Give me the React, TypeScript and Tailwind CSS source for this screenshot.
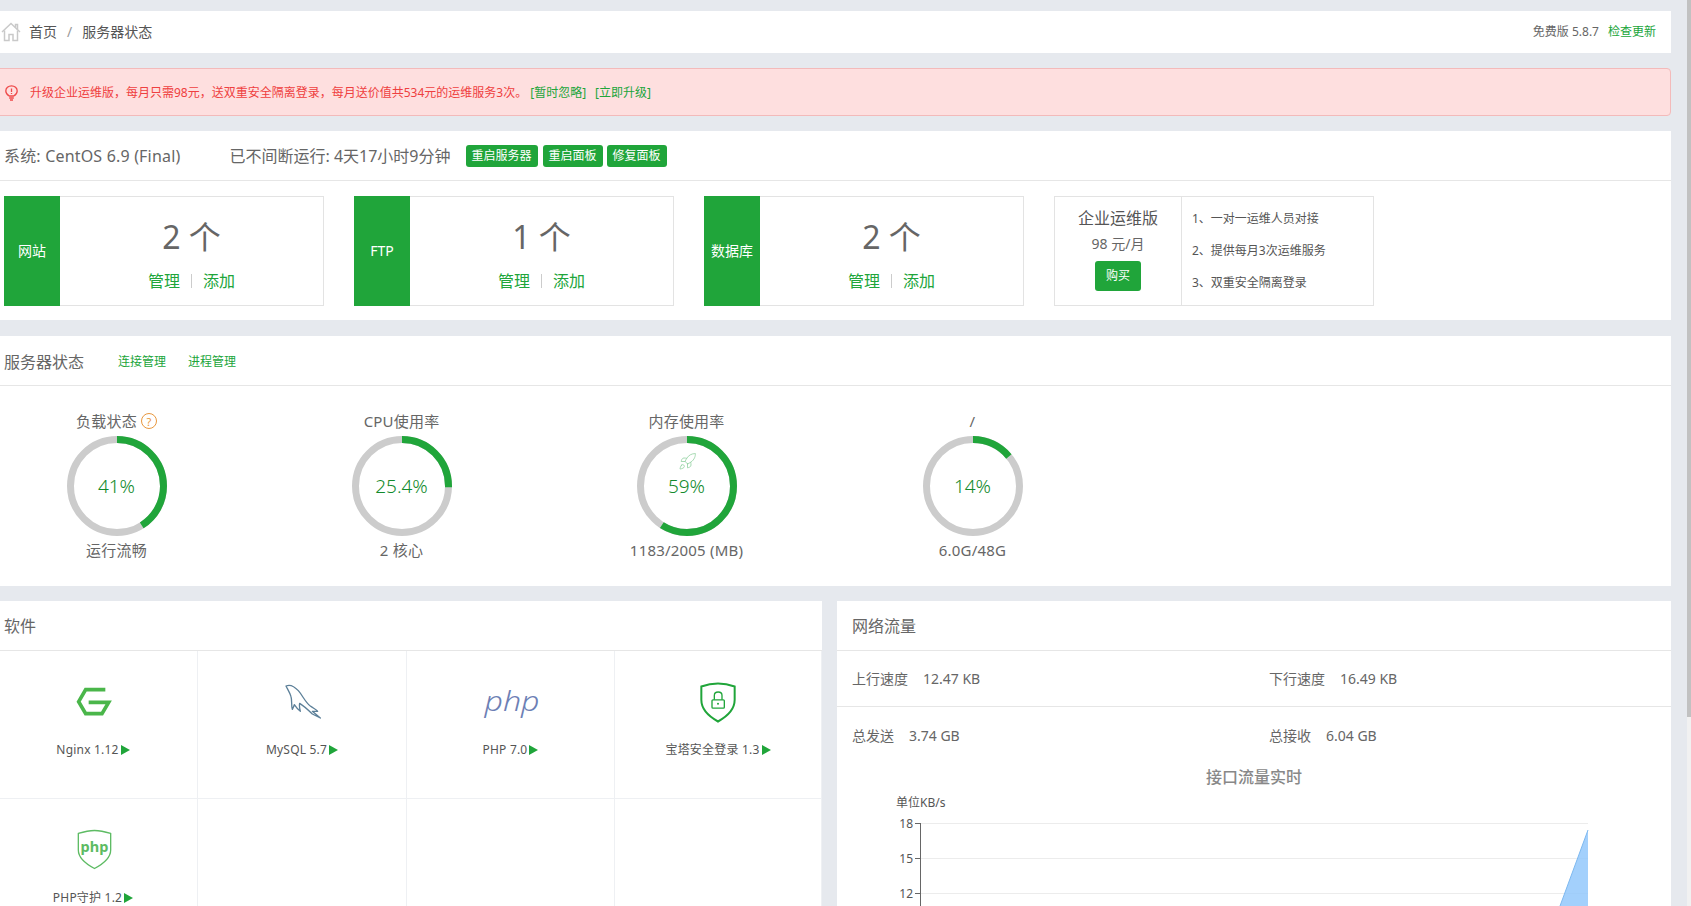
import { Rocket } from 'lucide-react'

const GREEN = '#20a53a'

function HomeIcon() {
  return (
    <svg width="20" height="20" viewBox="0 0 20 20" fill="none" stroke="#c9c9c9" strokeWidth="1.5">
      <path d="M1 10 L10 1.5 L19 10" />
      <path d="M14.5 5.5 V2.5 H16.5 V7.5" />
      <path d="M3.5 8.5 V18.5 H8 V12.5 H12 V18.5 H16.5 V8.5" />
    </svg>
  )
}

function BulbIcon() {
  return (
    <svg width="13" height="16" viewBox="0 0 13 16" fill="none" stroke="#ef4a4a" strokeWidth="1.3">
      <path d="M4.2 11 C2 9.6 0.8 7.9 0.8 5.9 C0.8 3 3.3 0.8 6.5 0.8 C9.7 0.8 12.2 3 12.2 5.9 C12.2 7.9 11 9.6 8.8 11 Z" />
      <path d="M4.2 13 H8.8 M5 15 H8" />
      <path d="M6.5 3.4 V7 M6.5 8 V9" />
    </svg>
  )
}

function Stat({ label, count }: { label: string; count: number }) {
  return (
    <div className="flex h-[110px] w-[320px] border border-[#e3e3e3]">
      <div className="-my-px -ml-px flex w-[56px] items-center justify-center bg-[#20a53a] pb-[2px] text-[14px] text-white">{label}</div>
      <div className="flex flex-1 flex-col items-center">
        <div className="mt-[18px] flex h-[44px] items-center text-[32px] text-[#666]">{count} 个</div>
        <div className="mt-[10px] flex h-[24px] items-center text-[16px] text-[#20a53a]">
          管理
          <span className="mx-[11px] h-[14px] w-px bg-[#ccc]" />
          添加
        </div>
      </div>
    </div>
  )
}

function Gauge({ title, value, text, bottom, hint, rocket, last }: { title: string; value: number; text: string; bottom: string; hint?: boolean; rocket?: boolean; last?: boolean }) {
  const r = 46.5
  const c = 2 * Math.PI * r
  return (
    <div className={last ? 'ml-[1px] flex w-[285px] flex-col items-center' : 'flex w-[285px] flex-col items-center'}>
      <div className="flex h-[20px] items-center text-[15px] tracking-[0.2px] text-[#666]">
        {title}
        {hint && (
          <span className="ml-[4px] flex size-[16px] items-center justify-center rounded-full border border-[#e8973e] text-[11px] leading-none text-[#e8973e]">?</span>
        )}
      </div>
      <div className="relative mt-[5px] size-[100px]">
        <svg width="100" height="100" viewBox="0 0 100 100" className="block -rotate-90">
          <circle cx="50" cy="50" r={r} fill="none" stroke="#cccccc" strokeWidth="7" />
          <circle cx="50" cy="50" r={r} fill="none" stroke={GREEN} strokeWidth="7" strokeDasharray={`${(c * value) / 100} ${c}`} />
        </svg>
        {rocket && <Rocket className="absolute top-[16px] left-[41px] text-[#8fd09e]" size={19} strokeWidth={1} />}
        <div className="absolute inset-0 flex items-center justify-center text-[19px] font-light text-[#128a2c]">{text}</div>
      </div>
      <div className="mt-[4px] flex h-[20px] items-center text-[15px] tracking-[0.2px] text-[#666]">{bottom}</div>
    </div>
  )
}

function NginxLogo() {
  return (
    <svg width="36" height="30" viewBox="80 80 108 90" fill="none" stroke="#4ab64a" strokeWidth="11" className="-mt-[2px]">
      <path d="M168 88 H109 L88 124 L109 160 H158 L178 126 H118" />
    </svg>
  )
}

function MysqlLogo() {
  return (
    <svg width="36" height="35" viewBox="70 40 108 105" fill="none" stroke="#5d8099" strokeWidth="4" strokeLinejoin="round" className="-mt-[4px]">
      <path d="M73 46 C84 41 98 47 110 60 C124 76 130 94 146 106 C156 113 164 117 168 122 L152 122 L176 142 L152 130 C142 120 130 108 114 98 C112 106 114 114 116 122 C108 116 102 108 98 102 C96 108 94 112 92 116 C88 104 92 92 88 78 C85 66 78 56 73 46 Z" />
    </svg>
  )
}

function PhpLogo() {
  return <span className="-mt-[6px] scale-x-[1.15] text-[28px] leading-none font-light text-[#6d7fb5] italic">php</span>
}

function LockShield() {
  return (
    <svg width="36" height="41" viewBox="60 32 108 122" fill="none" stroke={GREEN} className="-mt-[2px] -ml-[3px]">
      <path d="M114 36 C96 36 78 40 64 45 V85 C64 115 92 138 114 150 C136 138 164 115 164 85 V45 C150 40 132 36 114 36 Z" strokeWidth="6" />
      <rect x="96" y="85" width="37" height="25" rx="3" strokeWidth="4" />
      <path d="M103 85 V72 C103 58 126 58 126 72 V85" strokeWidth="4" />
      <circle cx="114" cy="97" r="3" fill={GREEN} stroke="none" />
    </svg>
  )
}

function PhpShield() {
  return (
    <svg width="35" height="41" viewBox="50 37 106 123" fill="none" className="-mt-[4px]">
      <path d="M103 41 C86 41 70 45 54 50 V100 C54 125 84 146 103 156 C122 146 152 125 152 100 V50 C136 45 120 41 103 41 Z" stroke="#5dbb63" strokeWidth="4" />
      <text x="103" y="105" textAnchor="middle" fontSize="44" fontWeight="700" fill="#5dbb63">php</text>
    </svg>
  )
}

function Soft({ name, children }: { name: string; children: React.ReactNode }) {
  return (
    <div className="flex h-[148px] flex-col items-center border-r border-b border-[#eef0f3]">
      <div className="mt-[22px] ml-[2px] flex h-[60px] items-center justify-center">{children}</div>
      <div className="mt-[7px] flex h-[20px] items-center text-[12px] tracking-[0.2px] text-[#555]">
        {name}
        <span className="ml-[2px] h-0 w-0 border-y-[5px] border-l-[9px] border-y-transparent border-l-[#20a53a]" />
      </div>
    </div>
  )
}

function NetRow({ cells }: { cells: [string, string][] }) {
  return (
    <div className="grid h-[56px] grid-cols-2 border-b border-[#e6e6e6] text-[14px] text-[#666] last:border-b-0">
      {cells.map(([k, v]) => (
        <div key={k} className="flex items-center gap-[15px] pl-[15px]">
          <span>{k}</span>
          <span>{v}</span>
        </div>
      ))}
    </div>
  )
}

function Chart() {
  return (
    <svg width="834" height="116" viewBox="0 0 834 116" className="block">
      <text x="59" y="17" fontSize="12" fill="#555">单位KB/s</text>
      {[33, 68, 103].map((y) => (
        <g key={y}>
          <line x1="84" y1={y + 0.5} x2="751" y2={y + 0.5} stroke="#ececec" />
          <line x1="78" y1={y + 0.5} x2="84" y2={y + 0.5} stroke="#666" />
        </g>
      ))}
      <line x1="83.5" y1="33" x2="83.5" y2="116" stroke="#666" />
      <text x="76" y="38" textAnchor="end" fontSize="12" fill="#555">18</text>
      <text x="76" y="73" textAnchor="end" fontSize="12" fill="#555">15</text>
      <text x="76" y="108" textAnchor="end" fontSize="12" fill="#555">12</text>
      <polygon points="751,40 751,116 723,116" fill="#8fc6fb" fillOpacity="0.82" />
      <line x1="723" y1="116" x2="751" y2="40" stroke="#7db8ef" />
    </svg>
  )
}

export default function App() {
  return (
    <div className="flex h-[906px] w-[1691px] overflow-hidden bg-[#e6e9ee] font-['Noto_Sans','Noto_Sans_CJK_SC',sans-serif] text-[#555]">
      <main className="-ml-[11px] flex w-[1698px] shrink-0 flex-col pt-[11px] pr-[16px]">
        <div className="flex h-[42px] shrink-0 items-center justify-between bg-white pr-[15px] pl-[12px]">
          <div className="flex items-center text-[14px]">
            <HomeIcon />
            <span className="-mt-[2px] ml-[8px]">首页</span>
            <span className="-mt-[2px] mx-[10px] text-[#999]">/</span>
            <span className="-mt-[2px]">服务器状态</span>
          </div>
          <div className="flex items-center text-[12px] text-[#666]">
            <span>免费版 5.8.7</span>
            <span className="ml-[9px] text-[#20a53a]">检查更新</span>
          </div>
        </div>

        <div className="mt-[15px] flex h-[48px] shrink-0 items-center rounded-[4px] border border-[#f3baba] bg-[#fedfdf] pt-[2px] pl-[15px] text-[12px] text-[#ef4040]">
          <BulbIcon />
          <span className="ml-[12px]">升级企业运维版，每月只需98元，送双重安全隔离登录，每月送价值共534元的运维服务3次。</span>
          <span className="ml-[3px] text-[#20a53a]">[暂时忽略]</span>
          <span className="ml-[9px] text-[#20a53a]">[立即升级]</span>
        </div>

        <section className="mt-[15px] shrink-0 bg-white">
          <div className="flex h-[50px] items-center border-b border-[#e6e6e6] pl-[15px] text-[16px] text-[#666]">
            <span className="tracking-[0.18px]">系统: CentOS 6.9 (Final)</span>
            <span className="ml-[49px]">已不间断运行: 4天17小时9分钟</span>
            <div className="ml-[15px] flex text-[12px] text-white">
              <span className="flex h-[22px] items-center rounded-[3px] bg-[#20a53a] px-[6px] pt-[1px]">重启服务器</span>
              <span className="ml-[5px] flex h-[22px] items-center rounded-[3px] bg-[#20a53a] px-[6px] pt-[1px]">重启面板</span>
              <span className="ml-[4px] flex h-[22px] items-center rounded-[3px] bg-[#20a53a] px-[6px] pt-[1px]">修复面板</span>
            </div>
          </div>
          <div className="flex gap-[30px] pt-[15px] pb-[14px] pl-[15px]">
            <Stat label="网站" count={2} />
            <Stat label="FTP" count={1} />
            <Stat label="数据库" count={2} />
            <div className="flex h-[110px] w-[320px] border border-[#e3e3e3]">
              <div className="flex w-[127px] flex-col items-center border-r border-[#e3e3e3]">
                <div className="mt-[10px] flex h-[22px] items-center text-[16px] text-[#555]">企业运维版</div>
                <div className="mt-[3px] flex h-[22px] items-center text-[14px] text-[#666]">98 元/月</div>
                <div className="mt-[7px] flex h-[30px] w-[46px] items-center justify-center rounded-[3px] bg-[#20a53a] text-[12px] text-white">购买</div>
              </div>
              <div className="flex flex-1 flex-col gap-[12px] pt-[12px] pl-[10px] text-[12px] text-[#555]">
                <div className="flex h-[20px] items-center">1、一对一运维人员对接</div>
                <div className="flex h-[20px] items-center">2、提供每月3次运维服务</div>
                <div className="flex h-[20px] items-center">3、双重安全隔离登录</div>
              </div>
            </div>
          </div>
        </section>

        <section className="mt-[16px] shrink-0 bg-white">
          <div className="flex h-[50px] items-center border-b border-[#e6e6e6] pt-[2px] pl-[15px]">
            <span className="text-[16px] text-[#666]">服务器状态</span>
            <span className="ml-[34px] text-[12px] text-[#20a53a]">连接管理</span>
            <span className="ml-[22px] text-[12px] text-[#20a53a]">进程管理</span>
          </div>
          <div className="-ml-[15px] flex h-[200px] pt-[25px]">
            <Gauge title="负载状态" value={41} text="41%" bottom="运行流畅" hint />
            <Gauge title="CPU使用率" value={25.4} text="25.4%" bottom="2 核心" />
            <Gauge title="内存使用率" value={59} text="59%" bottom="1183/2005 (MB)" rocket />
            <Gauge title="/" value={14} text="14%" bottom="6.0G/48G" last />
          </div>
        </section>

        <div className="mt-[15px] grid flex-1 grid-cols-[833px_834px] gap-[15px]">
          <section className="bg-white">
            <div className="flex h-[50px] items-center border-b border-[#e6e6e6] pl-[15px] text-[16px] text-[#666]">软件</div>
            <div className="grid grid-cols-[209px_209px_208px_207px]">
              <Soft name="Nginx 1.12"><NginxLogo /></Soft>
              <Soft name="MySQL 5.7"><MysqlLogo /></Soft>
              <Soft name="PHP 7.0"><PhpLogo /></Soft>
              <Soft name="宝塔安全登录 1.3"><LockShield /></Soft>
              <Soft name="PHP守护 1.2"><PhpShield /></Soft>
              <div className="h-[148px] border-r border-b border-[#eef0f3]" />
              <div className="h-[148px] border-r border-b border-[#eef0f3]" />
              <div className="h-[148px] border-r border-b border-[#eef0f3]" />
            </div>
          </section>
          <section className="bg-white">
            <div className="flex h-[50px] items-center border-b border-[#e6e6e6] pl-[15px] text-[16px] text-[#666]">网络流量</div>
            <div>
              <NetRow cells={[['上行速度', '12.47 KB'], ['下行速度', '16.49 KB']]} />
              <NetRow cells={[['总发送', '3.74 GB'], ['总接收', '6.04 GB']]} />
            </div>
            <div className="flex h-[27px] items-center justify-center text-[16px] font-medium text-[#888]">接口流量实时</div>
            <Chart />
          </section>
        </div>
      </main>
      <div className="ml-auto h-full w-[4px] shrink-0 bg-[#f1f1f1]">
        <div className="h-[717px] bg-[#c1c1c1]" />
      </div>
    </div>
  )
}
